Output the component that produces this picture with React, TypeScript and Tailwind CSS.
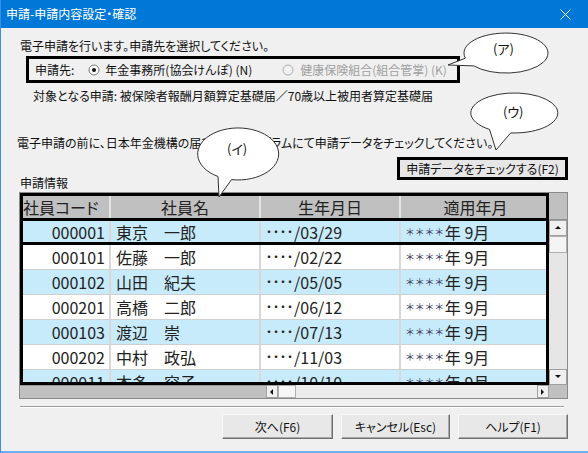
import React from "react";

const rows = [
  { code: "000001", name: "東京　一郎", birth: "/03/29" },
  { code: "000101", name: "佐藤　一郎", birth: "/02/22" },
  { code: "000102", name: "山田　紀夫", birth: "/05/05" },
  { code: "000201", name: "高橋　二郎", birth: "/06/12" },
  { code: "000103", name: "渡辺　崇", birth: "/07/13" },
  { code: "000202", name: "中村　政弘", birth: "/11/03" },
  { code: "000011", name: "本多　容子", birth: "/10/10" },
];

const font = "font-['Noto_Sans_CJK_JP','Noto_Sans',sans-serif] [font-feature-settings:'palt']";

function Radio({ checked, disabled }: { checked?: boolean; disabled?: boolean }) {
  return (
    <svg width="12" height="12" viewBox="0 0 12 12" className="shrink-0">
      <circle cx="6" cy="6" r="5" fill={disabled ? "#f0f0f0" : "#fff"} stroke={disabled ? "#b0b0b0" : "#7a7a7a"} />
      {checked && <circle cx="6" cy="6" r="2" fill="#111" />}
    </svg>
  );
}

function WinButton({ label, className = "" }: { label: string; className?: string }) {
  return (
    <div
      className={`h-[25px] flex items-center justify-center bg-[#e8e8e8] border border-t-[#f8f8f8] border-l-[#f8f8f8] border-r-[#707070] border-b-[#707070] shadow-[inset_-1px_-1px_0_#a8a8a8] text-[12px] text-[#111] ${className}`}
    >
      {label}
    </div>
  );
}

function Arrow({ dir }: { dir: "up" | "down" | "left" | "right" }) {
  const pts = {
    up: "1,5 4,2 7,5",
    down: "1,2 4,5 7,2",
    left: "5,1 2,4 5,7",
    right: "2,1 5,4 2,7",
  }[dir];
  return (
    <svg width="8" height="8" viewBox="0 0 8 8">
      <polygon points={pts} fill="#111" />
    </svg>
  );
}

export default function App() {
  return (
    <div className={`relative w-[588px] h-[453px] bg-[#f0f0f0] border-l border-[#3d8ee0] overflow-hidden ${font}`}>
      {/* Title bar */}
      <div className="h-[28px] bg-[#0078d7] flex items-center justify-between pl-[5px] pr-[17px] text-white text-[12px]">
        <span>申請-申請内容設定・確認</span>
        <svg width="11" height="11" viewBox="0 0 11 11">
          <path d="M0.5 0.5 L10.5 10.5 M10.5 0.5 L0.5 10.5" stroke="#fff" strokeWidth="1" />
        </svg>
      </div>

      <div className="text-[12px] text-[#111] leading-[16px]">
        <div className="mt-[10px] ml-[19px]">電子申請を行います。申請先を選択してください。</div>

        <div className="mt-[2px] ml-[25px] w-[434px] h-[27px] border-[3px] border-black flex items-center pl-[6px]">
          <span>申請先:</span>
          <div className="ml-[14px] flex items-center gap-[5px]">
            <Radio checked />
            <span>年金事務所(協会けんぽ) (N)</span>
          </div>
          <div className="ml-[30px] flex items-center gap-[6px] text-[#a0a0a0]">
            <Radio disabled />
            <span>健康保険組合(組合管掌) (K)</span>
          </div>
        </div>

        <div className="mt-[5px] ml-[32px]">対象となる申請: 被保険者報酬月額算定基礎届／70歳以上被用者算定基礎届</div>

        <div className="mt-[31px] ml-[16px]">電子申請の前に、日本年金機構の届書作成プログラムにて申請データをチェックしてください。</div>

        <div className="mt-[6px] flex justify-end pr-[20px]">
          <div className="w-[171px] h-[23px] border-[3px] border-black bg-[#e6e6e6] flex items-center justify-center">
            申請データをチェックする(F2)
          </div>
        </div>

        <div className="-mt-[5px] ml-[19px]">申請情報</div>

        {/* Grid */}
        <div className="mt-[1px] ml-[18px] w-[549px] h-[207px] border border-[#8a8a8a] flex flex-col">
          <div className="flex h-[192px]">
            <div className="relative w-[530px] h-[192px] overflow-hidden bg-white">
              <div className="grid grid-cols-[91px_150px_140px_149px] h-[27px] pt-[1px] bg-[#c0c0c0] text-[16px] text-[#222] leading-none">
                <div className="flex items-center pl-[3px] border-r-2 border-r-[#e4e4e4] border-b border-b-[#909090]">社員コード</div>
                <div className="flex items-center justify-center border-r-2 border-r-[#e4e4e4] border-b border-b-[#909090]">社員名</div>
                <div className="flex items-center justify-center border-r-2 border-r-[#e4e4e4] border-b border-b-[#909090]">生年月日</div>
                <div className="flex items-center justify-center border-b border-b-[#909090]">適用年月</div>
              </div>
              {rows.map((r, i) => (
                <div
                  key={r.code}
                  className={`grid grid-cols-[91px_150px_140px_149px] h-[25px] text-[16px] text-[#222] leading-none ${
                    i % 2 === 0 ? "bg-[#c7ebfb]" : "bg-white"
                  }`}
                >
                  <div className="flex items-center justify-end pr-[4px] border-r-2 border-r-[#d8d8d8] border-b border-b-[#d0d0d0]">{r.code}</div>
                  <div className="flex items-center pl-[5px] border-r-2 border-r-[#d8d8d8] border-b border-b-[#d0d0d0]">{r.name}</div>
                  <div className="flex items-center pl-[5px] border-r-2 border-r-[#d8d8d8] border-b border-b-[#d0d0d0]">
                    <span className="text-[12px] tracking-[1px]">・・・・</span>
                    {r.birth}
                  </div>
                  <div className="flex items-center pl-[5px] border-b border-b-[#d0d0d0]">
                    <span className="text-[10px] text-[#3a3a5a] tracking-[1.5px]">＊＊＊＊</span>
                    年 9月
                  </div>
                </div>
              ))}
              {/* highlight boxes */}
              <div className="absolute inset-0 border-[3px] border-black" />
              <div className="absolute left-0 top-[25px] w-[530px] h-[27px] border-[3px] border-black" />
            </div>
            {/* vertical scrollbar */}
            <div className="w-[18px] flex flex-col">
              <div className="h-[27px] bg-[#c0c0c0] border-b border-[#909090]" />
              <div className="h-[16px] bg-[#f0f0f0] border border-[#a0a0a0] flex items-center justify-center">
                <Arrow dir="up" />
              </div>
              <div className="h-[17px] bg-[#f4f4f4] border border-[#b0b0b0]" />
              <div className="flex-1 bg-[#e6e6e6]" />
              <div className="h-[16px] bg-[#f0f0f0] border border-[#a0a0a0] flex items-center justify-center">
                <Arrow dir="down" />
              </div>
            </div>
          </div>
          {/* horizontal scrollbar row */}
          <div className="flex flex-1">
            <div className="w-[246px] bg-[#c0c0c0] border-t border-[#9a9a9a]" />
            <div className="w-[12px] bg-[#f0f0f0] border border-[#a0a0a0] flex items-center justify-center">
              <Arrow dir="left" />
            </div>
            <div className="w-[18px] bg-[#f6f6f6] border border-[#b0b0b0]" />
            <div className="flex-1 bg-[#ececec]" />
            <div className="w-[12px] bg-[#f0f0f0] border border-[#a0a0a0] flex items-center justify-center">
              <Arrow dir="right" />
            </div>
            <div className="w-[18px] bg-[#c0c0c0]" />
          </div>
        </div>

        {/* separator */}
        <div className="mt-[7px] ml-[19px] w-[544px] h-[2px] border-t border-[#a0a0a0] border-b border-b-white" />

        <div className="mt-[6px] flex justify-end gap-[8px] pr-[20px]">
          <WinButton label="次へ(F6)" className="w-[111px]" />
          <WinButton label="キャンセル(Esc)" className="w-[109px]" />
          <WinButton label="ヘルプ(F1)" className="w-[110px]" />
        </div>
      </div>

      {/* bottom window edge */}
      <div className="absolute left-0 bottom-0 w-full h-[2px] bg-[#6fb0ec]" />

      {/* callouts */}
      <svg className="absolute left-0 top-0 pointer-events-none" width="588" height="453">
        <path d="M464.4 58.2 A42 20 0 1 1 472.8 65.9 L447 65 Z" fill="#fff" stroke="#333" strokeWidth="1" />
        <path d="M217 176.5 A40.5 26 0 1 1 230.5 179.6 L218 197 Z" fill="#fff" stroke="#333" strokeWidth="1" />
        <path d="M488.5 129.4 A43.5 20 0 1 1 509.7 132.9 L495 150 Z" fill="#fff" stroke="#333" strokeWidth="1" />
      </svg>
      <span className="absolute left-[492px] top-[41px] text-[13px] leading-[16px] text-[#111]">(ア)</span>
      <span className="absolute left-[226px] top-[141px] text-[13px] leading-[16px] text-[#111]">(イ)</span>
      <span className="absolute left-[502px] top-[104px] text-[13px] leading-[16px] text-[#111]">(ウ)</span>
    </div>
  );
}
